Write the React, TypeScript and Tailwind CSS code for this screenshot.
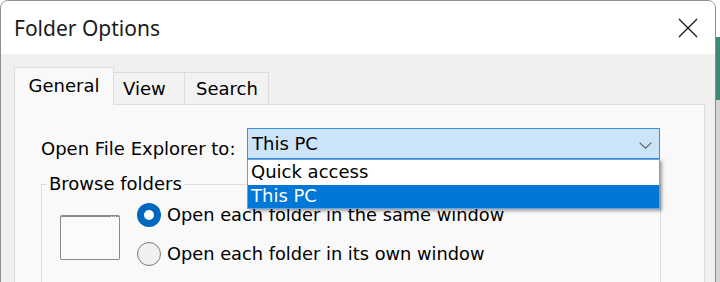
export default function App() {
  return (
    <div className="w-[720px] h-[282px] overflow-hidden flex bg-white font-['DejaVu_Sans',sans-serif] text-black">
      <div className="w-[716px] h-[300px] shrink-0 flex flex-col border border-[#8f8f8f] rounded-t-[8px] overflow-hidden bg-[#f0f0f0]">
        <div className="h-[53px] shrink-0 bg-white flex items-center justify-between pl-[13px] pr-[17px]">
          <span className="font-['Noto_Sans',sans-serif] text-[21px] leading-[28px] text-[#1b1b1b]">Folder Options</span>
          <svg width="20" height="20" viewBox="0 0 20 20">
            <path d="M1 1 L19 19 M19 1 L1 19" stroke="#1a1a1a" strokeWidth="1.3" fill="none" />
          </svg>
        </div>
        <div className="flex-1 flex flex-col pt-[13px] pl-[13px] pr-[10px]">
          <div className="h-[37px] flex items-end shrink-0 text-[18px] leading-[22px]">
            <div className="w-[100px] h-[38px] -mb-px relative z-10 bg-[#f9f9f9] border border-b-0 border-[#dcdcdc] pt-[7px] text-center">
              General
            </div>
            <div className="w-[71px] h-[32px] border border-b-0 border-l-0 border-[#dcdcdc] bg-[#f2f2f2] pl-[9px] pt-[5px]">
              View
            </div>
            <div className="w-[84px] h-[32px] border border-b-0 border-l-0 border-[#dcdcdc] bg-[#f2f2f2] pl-[11px] pt-[5px]">
              Search
            </div>
          </div>
          <div className="flex-1 bg-[#f9f9f9] border border-[#dcdcdc] pl-[26px] pt-[23px] text-[18px] leading-[22px]">
            <div className="flex items-start h-[31px]">
              <div className="w-[206px] mt-[10px]">Open File Explorer to:</div>
              <div className="relative w-[413px] h-[31px] border border-[#3d8ee0] bg-[#cce4f7] flex items-center justify-between pl-[4px] pr-[7px]">
                <span>This PC</span>
                <svg width="13" height="7" viewBox="0 0 13 7" className="mt-[3px]">
                  <path d="M0.6 0.6 L6.5 6.2 L12.4 0.6" stroke="#5f5f5f" strokeWidth="1.2" fill="none" />
                </svg>
                <div className="absolute left-[-1px] top-[30px] w-[413px] z-20 border border-[#64a3e4] bg-white shadow-[2px_2px_3px_rgba(0,0,0,0.35)]">
                  <div className="h-[25px] pl-[3px] pt-[1px]">Quick access</div>
                  <div className="h-[23px] pl-[3px] bg-[#0078d7] text-white">This PC</div>
                </div>
              </div>
            </div>
            <fieldset className="mt-[14px] w-[620px] h-[140px] border border-[#dcdcdc] pl-[5px] pt-[7px]">
              <legend className="leading-[22px] py-0 pl-[2px] pr-[2px]">Browse folders</legend>
              <div className="flex items-start">
                <div className="ml-[13px] mt-[13px] w-[60px] h-[45px] rounded-[2px] border border-t-2 border-[#8a8a8a] bg-[#fbfbfb] flex justify-end pr-[3px]">
                  <div className="flex gap-[1px] mt-[-2px] h-[2px] items-center">
                    <div className="w-[1px] h-[1px] bg-[#d8d8d8]" />
                    <div className="w-[1px] h-[1px] bg-[#d8d8d8]" />
                    <div className="w-[1px] h-[1px] bg-[#d8d8d8]" />
                  </div>
                </div>
                <div className="ml-[17px] flex flex-col gap-[14px] text-[17.8px]">
                  <div className="h-[25px] flex items-center gap-[6px]">
                    <div className="w-[24px] h-[24px] rounded-full bg-[#0067c0] flex items-center justify-center">
                      <div className="w-[10px] h-[10px] rounded-full bg-white" />
                    </div>
                    <span>Open each folder in the same window</span>
                  </div>
                  <div className="h-[25px] flex items-center gap-[6px]">
                    <div className="w-[24px] h-[24px] rounded-full border border-[#7a7a7a] bg-[#f0f0f0]" />
                    <span>Open each folder in its own window</span>
                  </div>
                </div>
              </div>
            </fieldset>
          </div>
        </div>
      </div>
      <div className="flex-1 flex flex-col">
        <div className="h-[37px] bg-white" />
        <div className="h-[63px] bg-[#3b8a77]" />
        <div className="flex-1 bg-[#d4d4d4]" />
      </div>
    </div>
  );
}
